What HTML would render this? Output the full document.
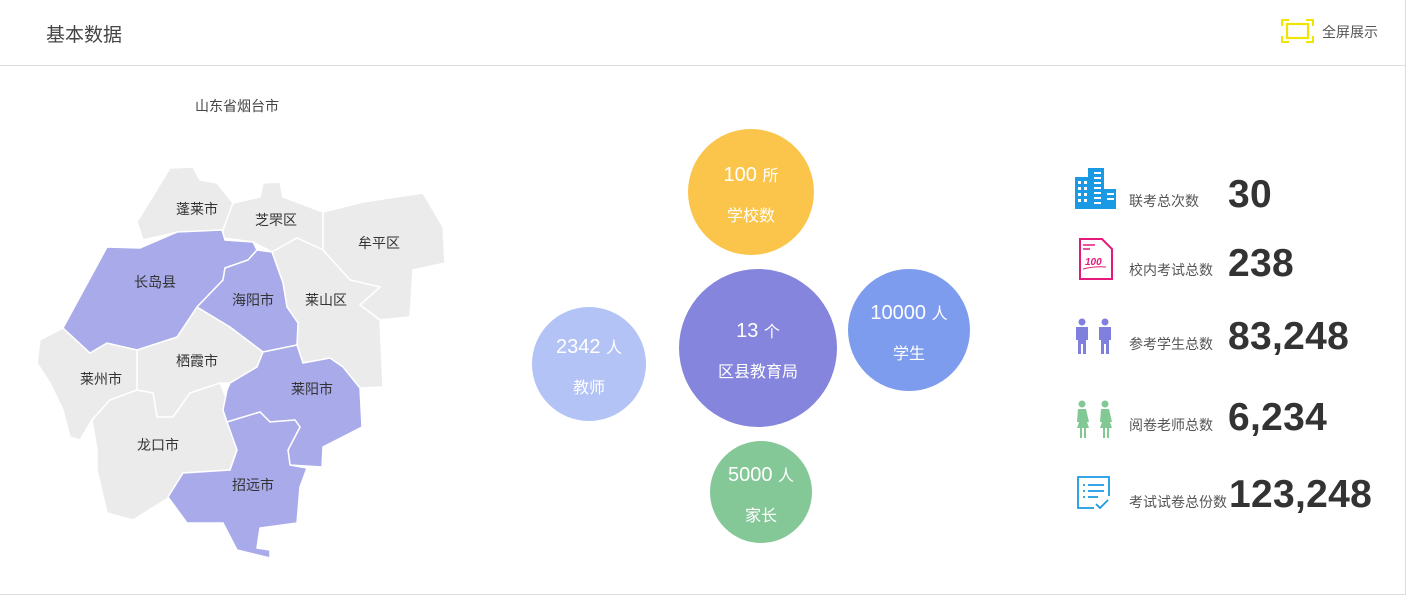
<!DOCTYPE html>
<html><head><meta charset="utf-8"><style>
body{margin:0;width:1407px;height:596px;background:#fff;font-family:"Liberation Sans","Noto Sans CJK SC",sans-serif;overflow:hidden;position:relative}
.frame{position:absolute;left:0;top:0;width:1405px;height:594px;border-right:1px solid #ddd;border-bottom:1px solid #ddd}
.hdr{position:absolute;left:0;top:0;width:1405px;height:65px;border-bottom:1px solid #ddd}
.title{position:absolute;left:46px;top:20px;font-size:19px;color:#444}
.fs{position:absolute;left:1322px;top:22px;font-size:14px;color:#555}
.lab{position:absolute;font-size:14px;color:#555}
.num{position:absolute;font-size:39px;font-weight:bold;color:#333;line-height:1;letter-spacing:0.3px}
</style></head><body>
<div class="frame"></div>
<div class="hdr"></div>
<div class="title">基本数据</div>
<svg style="position:absolute;left:1281px;top:19px" width="33" height="24" viewBox="0 0 33 24">
<path d="M1 7V1H8M25 1H32V7M32 17V23H25M8 23H1V17" fill="none" stroke="#f0e400" stroke-width="2"/>
<rect x="6" y="5" width="21" height="14" fill="none" stroke="#f0e400" stroke-width="2.2"/>
</svg>
<div class="fs">全屏展示</div>
<div class="lab" style="left:195px;top:96px;color:#444">山东省烟台市</div>

<svg style="position:absolute;left:0;top:0" width="1407" height="596">
<g stroke="#fff" stroke-width="1.5" font-size="14" fill="#ebebeb">
<polygon points="137,222 170,168 193,167 200,180 217,183 233,203 223,230 178,232 143,240"/>
<polygon points="223,230 233,203 260,197 263,183 280,182 283,197 323,212 323,250 297,238 272,252 253,242 223,238"/>
<polygon points="323,212 363,202 423,193 443,227 445,263 413,270 410,317 380,320 360,305 380,287 350,280 323,250"/>
<polygon points="272,252 297,238 323,250 350,280 380,287 360,305 380,320 383,387 360,388 343,367 330,358 303,363 297,345 298,323 287,307 283,283"/>
<polygon points="197,307 230,327 263,352 257,367 230,383 220,383 190,393 173,417 157,417 153,393 137,390 137,350 177,337"/>
<polygon points="63,328 90,353 107,343 137,350 137,390 110,400 92,420 80,440 70,437 63,410 50,383 37,363 40,340"/>
<polygon points="92,420 110,400 137,390 153,393 157,417 173,417 190,393 220,383 230,407 227,420 237,450 230,470 183,473 170,497 133,520 107,513 97,470 97,450"/>
<g fill="#a8aaea">
<polygon points="63,328 107,247 140,248 177,232 222,230 225,240 253,242 257,250 248,260 225,268 223,280 197,307 177,337 137,350 107,343 90,353"/>
<polygon points="225,268 248,260 257,250 272,252 283,283 287,307 298,323 297,345 263,352 230,327 197,307 223,280"/>
<polygon points="230,383 257,367 263,352 297,345 303,363 330,358 343,367 360,388 362,427 323,447 322,467 290,465 288,450 300,427 295,420 270,422 260,412 227,422 223,410 227,390"/>
<polygon points="227,422 260,412 270,422 295,420 300,427 288,450 290,465 307,468 300,487 297,523 260,528 257,548 270,550 270,558 237,550 223,523 187,523 168,497 183,473 230,470 237,450"/>
</g>
</g>
<g font-size="14" fill="#333" font-family="Liberation Sans,Noto Sans CJK SC,sans-serif" text-anchor="middle">
<text x="197" y="214">蓬莱市</text><text x="276" y="225">芝罘区</text><text x="379" y="248">牟平区</text>
<text x="155" y="287">长岛县</text><text x="253" y="305">海阳市</text><text x="326" y="305">莱山区</text>
<text x="197" y="366">栖霞市</text><text x="101" y="384">莱州市</text><text x="312" y="394">莱阳市</text>
<text x="158" y="450">龙口市</text><text x="253" y="490">招远市</text>
</g>
<g fill="#fff" font-family="Liberation Sans,Noto Sans CJK SC,sans-serif" text-anchor="middle">
<circle cx="751" cy="192" r="63" fill="#fbc54c"/>
<text x="751" y="181" font-size="20">100 <tspan font-size="16">所</tspan></text><text x="751" y="221" font-size="16">学校数</text>
<circle cx="758" cy="348" r="79" fill="#8585dd"/>
<text x="758" y="337" font-size="20">13 <tspan font-size="16">个</tspan></text><text x="758" y="377" font-size="16">区县教育局</text>
<circle cx="589" cy="364" r="57" fill="#b3c3f5"/>
<text x="589" y="353" font-size="20">2342 <tspan font-size="16">人</tspan></text><text x="589" y="393" font-size="16">教师</text>
<circle cx="909" cy="330" r="61" fill="#7e9cee"/>
<text x="909" y="319" font-size="20">10000 <tspan font-size="16">人</tspan></text><text x="909" y="359" font-size="16">学生</text>
<circle cx="761" cy="492" r="51" fill="#85c897"/>
<text x="761" y="481" font-size="20">5000 <tspan font-size="16">人</tspan></text><text x="761" y="521" font-size="16">家长</text>
</g>
<g fill="#1a9ae4">
<rect x="1075" y="177" width="16" height="32"/><rect x="1088" y="168" width="16" height="41"/><rect x="1104" y="189" width="12" height="20"/>
</g>
<g fill="#fff">
<rect x="1078" y="181" width="3" height="3"/><rect x="1084" y="181" width="3" height="3"/><rect x="1078" y="187" width="3" height="3"/><rect x="1084" y="187" width="3" height="3"/><rect x="1078" y="193" width="3" height="3"/><rect x="1084" y="193" width="3" height="3"/><rect x="1078" y="199" width="3" height="3"/><rect x="1084" y="199" width="3" height="3"/>
<rect x="1094" y="172" width="7" height="2"/><rect x="1094" y="177" width="7" height="2"/><rect x="1094" y="182" width="7" height="2"/><rect x="1094" y="187" width="7" height="2"/><rect x="1094" y="192" width="7" height="2"/><rect x="1094" y="197" width="7" height="2"/><rect x="1094" y="202" width="7" height="2"/>
<rect x="1107" y="193" width="7" height="2"/><rect x="1107" y="198" width="7" height="2"/>
</g>
<path d="M1080 239H1102L1112 249V279H1080Z" fill="none" stroke="#e5197a" stroke-width="2"/>
<path d="M1083 245H1095M1083 249H1090" stroke="#e5197a" stroke-width="1.5"/>
<text x="1085" y="265" font-size="10" font-style="italic" font-weight="bold" fill="#e5197a" font-family="Liberation Sans,sans-serif">100</text>
<path d="M1083 269Q1095 266 1106 267" stroke="#e5197a" fill="none"/>
<g fill="#7f7fdd">
<circle cx="1082" cy="322" r="3.5"/><path d="M1076 327h12v13h-2v14h-3v-10h-2v10h-3v-14h-2z"/>
<circle cx="1105" cy="322" r="3.5"/><path d="M1099 327h12v13h-2v14h-3v-10h-2v10h-3v-14h-2z"/>
</g>
<g fill="#82c894">
<circle cx="1082" cy="404" r="3.5"/><path d="M1078 409h8l3 13h-2l2 6h-3v10h-2v-10h-2v10h-2v-10h-3l2-6h-2z"/>
<circle cx="1105" cy="404" r="3.5"/><path d="M1101 409h8l3 13h-2l2 6h-3v10h-2v-10h-2v10h-2v-10h-3l2-6h-2z"/>
</g>
<path d="M1094 508H1078V477H1109V496" fill="none" stroke="#1a9ae4" stroke-width="1.8"/>
<path d="M1083 485h2M1088 485h16M1083 491h2M1088 491h16M1083 497h2M1088 497h10M1096 504l4 4 8-8" fill="none" stroke="#1a9ae4" stroke-width="1.8"/>
</svg>
<div class="lab" style="left:1129px;top:191px">联考总次数</div><div class="num" style="left:1228px;top:175px">30</div>
<div class="lab" style="left:1129px;top:260px">校内考试总数</div><div class="num" style="left:1228px;top:244px">238</div>
<div class="lab" style="left:1129px;top:334px">参考学生总数</div><div class="num" style="left:1228px;top:317px">83,248</div>
<div class="lab" style="left:1129px;top:415px">阅卷老师总数</div><div class="num" style="left:1228px;top:398px">6,234</div>
<div class="lab" style="left:1129px;top:492px">考试试卷总份数</div><div class="num" style="left:1229px;top:475px">123,248</div>
</body></html>
